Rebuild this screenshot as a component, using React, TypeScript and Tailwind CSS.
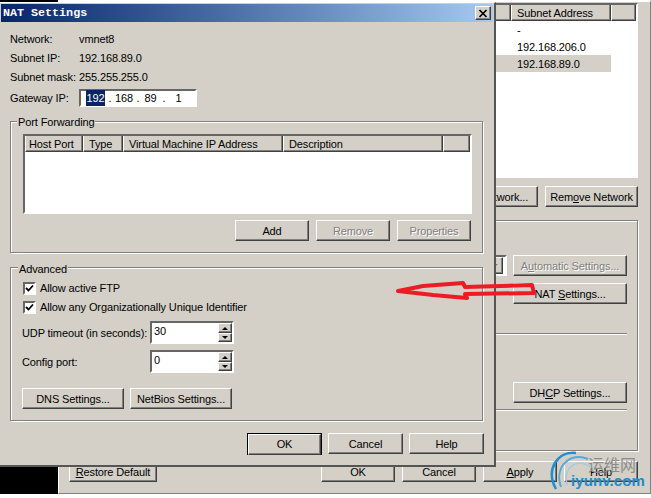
import type { ReactNode } from "react";

const bevel =
  "border border-t-white border-l-white border-r-[#404040] border-b-[#404040] shadow-[inset_-1px_-1px_0_#808080]";
const sunken = "border-2 border-t-[#666666] border-l-[#666666] border-r-white border-b-white bg-white";
const etched = "border border-[#808080] shadow-[1px_1px_0_#fff,inset_1px_1px_0_#fff]";

function Btn({ children, className = "", disabled = false }: { children: ReactNode; className?: string; disabled?: boolean }) {
  return (
    <div
      className={`flex h-[21px] shrink-0 items-center justify-center bg-[#d4d0c8] ${bevel} ${
        disabled ? "text-[#808080] [text-shadow:1px_1px_0_#fff]" : ""
      } ${className}`}
    >
      <span className="pt-[1px]">{children}</span>
    </div>
  );
}

function Check({ label }: { label: string }) {
  return (
    <div className="ml-[12px] flex h-[13px] items-center">
      <div className={`flex h-[13px] w-[13px] items-center justify-center ${sunken}`}>
        <svg width="9" height="9" viewBox="0 0 9 9">
          <path d="M1 4 L3.5 6.5 L8 1.5" fill="none" stroke="#000" strokeWidth="1.8" />
        </svg>
      </div>
      <span className="ml-[4px]">{label}</span>
    </div>
  );
}

function Spin({ label, value, className = "" }: { label: string; value: string; className?: string }) {
  return (
    <div className={`ml-[11px] flex h-[23px] items-center ${className}`}>
      <span className="w-[128px] whitespace-nowrap pt-[1px]">{label}</span>
      <div className={`flex h-[23px] w-[84px] ${sunken}`}>
        <span className="flex-1 pl-[2px] leading-[17px]">{value}</span>
        <div className="flex w-[14px] flex-col">
          <div className={`flex h-[10px] items-center justify-center bg-[#d4d0c8] ${bevel}`}>
            <div className="h-0 w-0 border-x-[3px] border-b-[3px] border-x-transparent border-b-black" />
          </div>
          <div className={`flex h-[9px] items-center justify-center bg-[#d4d0c8] ${bevel}`}>
            <div className="h-0 w-0 border-x-[3px] border-t-[3px] border-x-transparent border-t-black" />
          </div>
        </div>
      </div>
    </div>
  );
}

function Head({ label, className }: { label: string; className: string }) {
  return (
    <div className={`flex h-[16px] shrink-0 items-center overflow-hidden whitespace-nowrap pt-[1px] ${bevel} border-t-0 border-l-white ${className}`}>
      {label}
    </div>
  );
}

function InfoRow({ label, value }: { label: string; value: string }) {
  return (
    <div className="flex h-[19px] items-center">
      <span className="w-[69px]">{label}</span>
      <span>{value}</span>
    </div>
  );
}

function ParentWindow() {
  return (
    <div className="absolute left-[58px] top-0 flex h-[494px] w-[593px] flex-col items-end border-t-2 border-r border-b border-t-white border-r-[#808080] border-b-[#808080] border-l border-l-white bg-[#d4d0c8] pl-[10px] pr-[12px] pt-[1px]">
      <div className="h-[175px] w-[300px] shrink-0 border-2 border-t-[#666666] border-l-[#666666] border-r-white border-b-white bg-white">
        <div className="flex bg-[#d4d0c8]">
          <Head label="" className="w-[171px]" />
          <Head label="Subnet Address" className="w-[100px] pl-[5px]" />
          <Head label="" className="flex-1" />
        </div>
        <div className="flex h-[17px] items-center pl-[177px] pt-[1px]">-</div>
        <div className="flex h-[17px] items-center pl-[177px] pt-[1px]">192.168.206.0</div>
        <div className="flex h-[17px] w-[271px] items-center bg-[#d4d0c8] pl-[177px] pt-[1px]">192.168.89.0</div>
      </div>
      <div className="mt-[8px] flex gap-[7px]">
        <Btn className="w-[90px]">Add Network...</Btn>
        <Btn className="w-[93px]">
          Rem<u>o</u>ve Network
        </Btn>
      </div>
      <div className={`mt-[13px] flex h-[231px] w-[300px] shrink-0 flex-col items-end pr-[10px] pt-[34px] ${etched}`}>
        <div className="flex gap-[6px]">
          <div className={`flex h-[21px] w-[40px] items-center justify-end pr-[2px] ${sunken}`}>
            <div className={`flex h-[17px] w-[16px] items-center justify-center bg-[#d4d0c8] ${bevel}`}>
              <div className="h-0 w-0 border-x-[3px] border-t-[3px] border-x-transparent border-t-[#808080]" />
            </div>
          </div>
          <Btn disabled className="w-[114px]">
            A<u>u</u>tomatic Settings...
          </Btn>
        </div>
        <Btn className="mt-[7px] w-[114px]">
          NAT <u>S</u>ettings...
        </Btn>
        <div className="mt-[29px] h-[2px] w-[280px] border-t border-b border-t-[#808080] border-b-white" />
        <Btn className="mt-[47px] w-[114px]">
          DH<u>C</u>P Settings...
        </Btn>
        <div className="mt-[6px] h-[2px] w-[280px] border-t border-b border-t-[#808080] border-b-white" />
      </div>
      <div className="mt-[10px] flex w-full justify-between">
        <Btn className="w-[88px]">
          <u>R</u>estore Default
        </Btn>
        <div className="flex gap-[7px]">
          <Btn className="w-[74px]">OK</Btn>
          <Btn className="w-[74px]">Cancel</Btn>
          <Btn className="w-[74px]">
            <u>A</u>pply
          </Btn>
          <Btn className="w-[74px]">Help</Btn>
        </div>
      </div>
    </div>
  );
}

function NatDialog() {
  return (
    <div className="absolute left-0 top-[2px] flex h-[465px] w-[496px] flex-col border-t border-r-2 border-b-2 border-t-white border-r-[#555555] border-b-[#555555] bg-[#d4d0c8] pt-[1px]">
      <div className="mx-[1px] flex h-[18px] shrink-0 items-center justify-between bg-gradient-to-r from-[#0a246a] to-[#a6caf0] pl-[2px] pr-[2px]">
        <span className="pt-[1px] font-['Liberation_Mono',monospace] text-[11.7px] font-bold tracking-normal text-white">NAT Settings</span>
        <div className={`flex h-[14px] w-[16px] items-center justify-center bg-[#d4d0c8] ${bevel}`}>
          <svg width="10" height="9" viewBox="0 0 10 9">
            <path d="M1.5 1 L8.5 8 M8.5 1 L1.5 8" stroke="#000" strokeWidth="1.7" />
          </svg>
        </div>
      </div>

      <div className="flex flex-col pl-[10px] pt-[8px]">
        <InfoRow label="Network:" value="vmnet8" />
        <InfoRow label="Subnet IP:" value="192.168.89.0" />
        <InfoRow label="Subnet mask:" value="255.255.255.0" />
        <div className="mt-[2px] flex h-[18px] items-center">
          <span className="w-[69px] pt-[1px]">Gateway IP:</span>
          <div className={`flex h-[18px] w-[118px] items-center pl-[5px] ${sunken}`}>
            <span className="w-[19px] bg-[#0a246a] text-center text-white">192</span>
            <span className="w-[10px] text-center">.</span>
            <span className="w-[17px] text-center">168</span>
            <span className="w-[12px] text-center">.</span>
            <span className="w-[13px] text-center">89</span>
            <span className="w-[14px] text-center">.</span>
            <span className="w-[15px] text-center">1</span>
          </div>
        </div>

        <div className={`mt-[14px] h-[132px] w-[473px] ${etched}`}>
          <div className="-mt-[7px] ml-[6px] h-[14px] w-fit bg-[#d4d0c8] px-[1px] leading-[14px]">Port Forwarding</div>
          <div className="ml-[12px] mt-[5px] h-[80px] w-[449px] border-2 border-t-[#666666] border-l-[#666666] border-r-white border-b-white bg-white">
            <div className="flex bg-[#d4d0c8]">
              <Head label="Host Port" className="w-[58px] pl-[3px]" />
              <Head label="Type" className="w-[40px] pl-[5px]" />
              <Head label="Virtual Machine IP Address" className="w-[160px] pl-[5px]" />
              <Head label="Description" className="w-[160px] pl-[5px]" />
              <Head label="" className="flex-1" />
            </div>
          </div>
          <div className="mt-[6px] flex justify-end gap-[7px] pr-[11px]">
            <Btn className="w-[74px]">Add</Btn>
            <Btn disabled className="w-[74px]">Remove</Btn>
            <Btn disabled className="w-[74px]">Properties</Btn>
          </div>
        </div>

        <div className={`mt-[14px] h-[154px] w-[473px] ${etched}`}>
          <div className="-mt-[6px] ml-[7px] h-[14px] w-fit bg-[#d4d0c8] px-[1px] leading-[14px]">Advanced</div>
          <div className="mt-[6px] flex flex-col gap-[6px]">
            <Check label="Allow active FTP" />
            <Check label="Allow any Organizationally Unique Identifier" />
          </div>
          <Spin label="UDP timeout (in seconds):" value="30" className="mt-[7px]" />
          <Spin label="Config port:" value="0" className="mt-[6px]" />
          <div className="ml-[11px] mt-[15px] flex gap-[6px]">
            <Btn className="w-[102px]">DNS Settings...</Btn>
            <Btn className="w-[102px]">NetBios Settings...</Btn>
          </div>
        </div>

        <div className="mt-[12px] flex w-[474px] justify-end gap-[6px]">
          <div className="flex h-[22px] w-[75px] items-center justify-center border border-black">
            <Btn className="h-[20px] w-[73px]">OK</Btn>
          </div>
          <Btn className="w-[75px]">Cancel</Btn>
          <Btn className="w-[75px]">Help</Btn>
        </div>
      </div>
    </div>
  );
}

export default function App() {
  return (
    <div className="relative h-[498px] w-[651px] overflow-hidden bg-white font-['Liberation_Sans',Arial,sans-serif] text-[11px] tracking-[-0.12px] text-black">
      {/* desktop behind the windows */}
      <div className="absolute left-0 top-0 h-[494px] w-[58px] bg-black" />
      <ParentWindow />
      <NatDialog />

      {/* red arrow drawn on the screenshot */}
      <svg className="absolute left-0 top-0" width="651" height="498" viewBox="0 0 651 498">
        <path
          d="M398 291 L423 286 L463 283 L465 287 L532 285 L534 293 L465 294 L467 298 L433 295 Z"
          fill="none"
          stroke="#ed1c24"
          strokeWidth="4"
          strokeLinejoin="round"
        />
      </svg>

      {/* site watermark */}
      <div className="absolute left-[548px] top-[451px] h-[42px] w-[100px]">
        <svg className="absolute left-0 top-0" width="60" height="42" viewBox="0 0 60 42">
          <path d="M28 2 C10 0 -3 18 8 38" fill="none" stroke="#1f8fd0" strokeWidth="2.5" />
          <path d="M40 8 C22 0 6 16 13 36" fill="none" stroke="#55a9dc" strokeWidth="2" />
          <path d="M42 16 C28 6 14 18 19 34" fill="none" stroke="#9ccbe8" strokeWidth="1.5" />
        </svg>
        <span className="absolute left-[40px] top-[3px] font-['Noto_Sans_CJK_SC',sans-serif] text-[16px] leading-[20px] tracking-normal text-[#8c8c8c]">运维网</span>
        <span className="absolute left-[23px] top-[20px] font-['Liberation_Sans',sans-serif] text-[15px] font-bold leading-[20px] tracking-[0.1px] text-[#1c8ccc]">iyunv.com</span>
      </div>
    </div>
  );
}
